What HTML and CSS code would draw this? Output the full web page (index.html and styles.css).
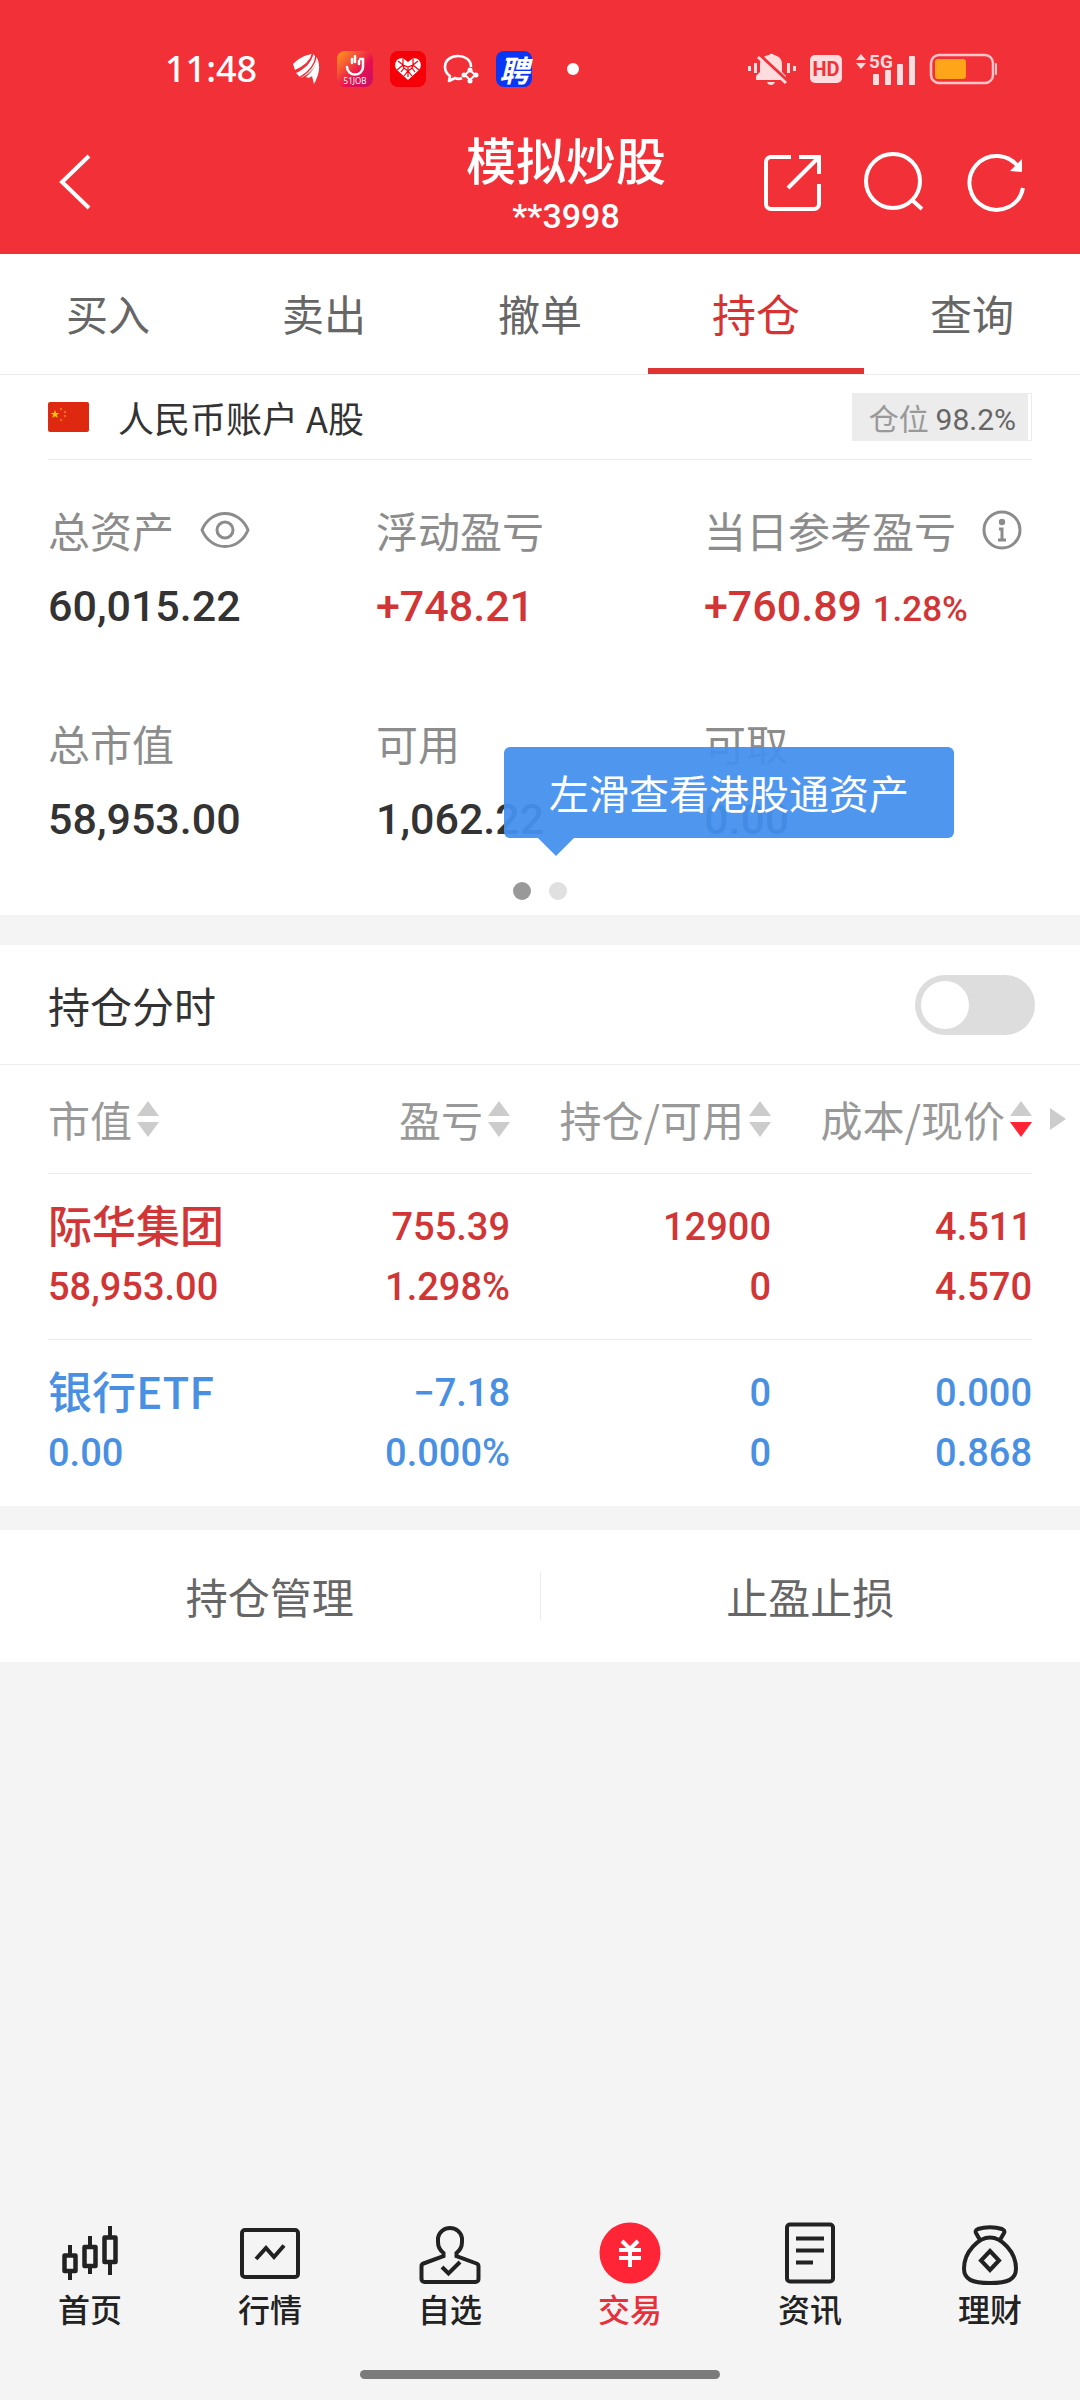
FILE: index.html
```html
<!DOCTYPE html>
<html lang="zh-CN">
<head>
  <meta charset="UTF-8">
  <meta name="viewport" content="width=device-width, initial-scale=1">
  <title>模拟炒股</title>
  <link rel="stylesheet" href="styles.css">
</head>
<body>

<div class="app">
  <header class="header">
    <!-- Status bar -->
    <div class="status">
      <div class="status-left">
        <span class="time">11:48</span>
        <svg width="28" height="32" viewBox="0 0 28 32" fill="#fff"><path d="M1 11C7 5 13 2 20 1c-1 8-7 12-17 16z"/><path d="M4 20C13 16 19 10 21 1l4 4c0 8-6 15-16 20z"/><path d="M14 24c6-5 10-11 11-19 4 8 2 17-3 26l-2-8c-2 2-4 2-6 1z"/><path d="M2 18.500C12 14 19 9 20.500 1M8 24.500C17 19 23 13 24 3" fill="none" stroke="#f23038" stroke-width="1.500"/></svg>
        <svg width="36" height="36" viewBox="0 0 36 36">
          <defs><linearGradient id="job" x1="0" y1="0" x2="1" y2="1"><stop offset="0" stop-color="#ff9d1c"/><stop offset=".6" stop-color="#e9104e"/><stop offset="1" stop-color="#c4106b"/></linearGradient></defs>
          <rect width="36" height="36" rx="8" fill="url(#job)"/>
          <path d="M10 16a8 7.500 0 0 0 16 0V8h-3M15 12V8M18 11V5M22 13V10" fill="none" stroke="#fff" stroke-width="2.500" stroke-linecap="round"/>
          <text x="18" y="33" text-anchor="middle" class="job-text">51JOB</text>
        </svg>
        <svg width="36" height="36" viewBox="0 0 36 36">
          <rect width="36" height="36" rx="8" fill="#f50008"/>
          <path d="M18 29L7 19c-5-6 1-14 7-11l4 3 4-3c6-3 12 5 7 11z" fill="#fff"/>
          <path d="M8 10l5 4-6 5M13 8v6l5 2 5-2V8M28 10l-5 4 6 5M11 21l3-4 4 3 4-3 3 4M18 16v10M14 25l4-5 4 5M13 14l1 3M23 14l-1 3" fill="none" stroke="#f50008" stroke-width="1.200"/>
        </svg>
        <svg width="36" height="32" viewBox="0 0 36 32" fill="none" stroke="#fff" stroke-width="2.600" stroke-linejoin="round"><path d="M28 14C28 6 21 3 15 3 8 3 2 7 2 14c0 4 2 7 5 9l-1 5 6-3c2 1 5 1 7 0"/><path d="M27 17l5 5-5 5-5-5z" stroke-width="2"/><g fill="#fff" stroke="none"><circle cx="27" cy="17" r="2.500"/><circle cx="33" cy="22" r="2.500"/><circle cx="27" cy="28" r="2.500"/><circle cx="21" cy="22" r="2.500"/></g></svg>
        <span class="zp-icon">聘</span>
        <span class="status-dot"></span>
      </div>
      <div class="status-right">
        <svg width="50" height="34" viewBox="0 0 50 34" fill="#ffdcdd"><path d="M9 28v-4l4-4v-8c0-5 4-8 9-9a3 3 0 0 1 5 0c5 1 8 4 8 9v8l4 4v4z"/><path d="M20 30h8c-1 4-7 4-8 0zM1 14h3v5H1zM7 11h3v10H7zM40 11h3v10h-3zM46 14h3v5h-3z"/><path d="M13 4l26 24" stroke="#f23038" stroke-width="4"/><path d="M11 5l28 26" stroke="#ffdcdd" stroke-width="3"/></svg>
        <span class="hd">HD</span>
        <svg width="62" height="34" viewBox="0 0 62 34" fill="#ffdcdd"><path d="M1 8l5-6 5 6zM1 11l5 6 5-6z"/><text x="14" y="16" class="net-text">5G</text><rect x="18" y="22" width="6" height="11" rx="1"/><rect x="30" y="18" width="6" height="15" rx="1"/><rect x="42" y="12" width="6" height="21" rx="1"/><rect x="54" y="4" width="6" height="29" rx="1"/></svg>
        <svg width="68" height="32" viewBox="0 0 68 32"><rect x="1" y="2" width="62" height="28" rx="8" fill="none" stroke="#ffc4c6" stroke-width="2.500"/><rect x="5" y="6" width="31" height="20" rx="3" fill="#ffa51a"/><rect x="65" y="10" width="2" height="12" rx="1" fill="#ffc4c6"/></svg>
      </div>
    </div>

    <!-- Title bar -->
    <div class="titlebar">
      <button class="icon-btn back" aria-label="返回">
        <svg width="60" height="60" viewBox="0 0 60 60"><path d="M41 1L14 27l27 26"/></svg>
      </button>
      <div class="title">
        <h1>模拟炒股</h1>
        <p>**3998</p>
      </div>
      <div class="title-actions">
        <button class="icon-btn" aria-label="分享">
          <svg width="60" height="60" viewBox="0 0 60 60"><path d="M29 2H9a5 5 0 0 0-5 5v42a5 5 0 0 0 5 5h43a5 5 0 0 0 5-5V29M37 2h20v17M57 2L26 33"/></svg>
        </button>
        <button class="icon-btn" aria-label="搜索">
          <svg width="60" height="60" viewBox="0 0 60 60"><circle cx="29" cy="26" r="27"/><path d="M48 45l10 9"/></svg>
        </button>
        <button class="icon-btn" aria-label="刷新">
          <svg width="60" height="60" viewBox="0 0 60 60"><path d="M53 13A27 27 0 1 0 57 33"/><path d="M56 4v13l-12-1z" fill="#fff" stroke="none"/></svg>
        </button>
      </div>
    </div>
  </header>

  <!-- Trade tabs -->
  <nav class="tabs">
    <a href="#buy">买入</a>
    <a href="#sell">卖出</a>
    <a href="#cancel">撤单</a>
    <a href="#hold" class="active">持仓</a>
    <a href="#query">查询</a>
  </nav>

  <!-- Assets -->
  <section class="assets">
    <div class="account">
      <svg class="flag" width="41" height="30" viewBox="0 0 41 30"><rect width="41" height="30" rx="2" fill="#de2910"/><path d="M7 8l1.200 3h3l-2.400 2 1 3L7 14.200 4.200 16l1-3-2.400-2h3z" fill="#ffc400"/><g fill="#f26a1b"><circle cx="13" cy="7" r="1.200"/><circle cx="17" cy="10" r="1.200"/><circle cx="17" cy="14" r="1.200"/><circle cx="13" cy="18" r="1.200"/></g></svg>
      <span class="account-name">人民币账户 A股</span>
      <span class="ratio"><span class="ratio-text">仓位 <b>98.2%</b></span></span>
    </div>

    <div class="summary">
      <div class="item">
        <div class="label">总资产
          <button class="eye" aria-label="隐藏金额"><svg width="50" height="40" viewBox="0 0 50 40"><path d="M2 20C11-2 39-2 48 20 39 42 11 42 2 20z"/><circle cx="25" cy="20" r="8"/></svg></button>
        </div>
        <div class="value">60,015.22</div>
      </div>
      <div class="item">
        <div class="label">浮动盈亏</div>
        <div class="value red">+748.21</div>
      </div>
      <div class="item">
        <div class="label">当日参考盈亏
          <button class="info" aria-label="说明"><svg width="40" height="40" viewBox="0 0 40 40"><circle cx="20" cy="20" r="18"/><circle cx="20" cy="12" r="3.200" fill="#8c8c8c" stroke="none"/><path d="M17 19h3v11M16 30h8"/></svg></button>
        </div>
        <div class="value red">+760.89 <small>1.28%</small></div>
      </div>
      <div class="item">
        <div class="label">总市值</div>
        <div class="value">58,953.00</div>
      </div>
      <div class="item">
        <div class="label">可用</div>
        <div class="value">1,062.22</div>
      </div>
      <div class="item">
        <div class="label">可取</div>
        <div class="value">0.00</div>
      </div>
    </div>

    <div class="dots">
      <span class="dot on"></span>
      <span class="dot"></span>
      <div class="tip">左滑查看港股通资产</div>
    </div>
  </section>

  <!-- Holdings -->
  <section class="holdings">
    <div class="switch-row">
      <label for="intraday">持仓分时</label>
      <input type="checkbox" id="intraday" class="switch">
    </div>
    <div class="table-wrap">
      <table>
        <thead>
          <tr>
            <th><button>市值<svg class="sort" width="22" height="36" viewBox="0 0 22 36"><path d="M0 15L11 0l11 15z"/><path d="M0 21l11 15 11-15z"/></svg></button></th>
            <th><button>盈亏<svg class="sort" width="22" height="36" viewBox="0 0 22 36"><path d="M0 15L11 0l11 15z"/><path d="M0 21l11 15 11-15z"/></svg></button></th>
            <th><button>持仓/可用<svg class="sort" width="22" height="36" viewBox="0 0 22 36"><path d="M0 15L11 0l11 15z"/><path d="M0 21l11 15 11-15z"/></svg></button></th>
            <th><button>成本/现价<svg class="sort" width="22" height="36" viewBox="0 0 22 36"><path d="M0 15L11 0l11 15z"/><path class="desc" d="M0 21l11 15 11-15z"/></svg></button></th>
          </tr>
        </thead>
        <tbody>
          <tr class="up">
            <td><span class="name">际华集团</span><span>58,953.00</span></td>
            <td><span>755.39</span><span>1.298%</span></td>
            <td><span>12900</span><span>0</span></td>
            <td><span>4.511</span><span>4.570</span></td>
          </tr>
          <tr class="down">
            <td><span class="name">银行ETF</span><span>0.00</span></td>
            <td><span>−7.18</span><span>0.000%</span></td>
            <td><span>0</span><span>0</span></td>
            <td><span>0.000</span><span>0.868</span></td>
          </tr>
        </tbody>
      </table>
      <div class="more"><svg width="16" height="22" viewBox="0 0 16 22"><path d="M0 0l16 11L0 22z" fill="#ccc"/></svg></div>
    </div>
  </section>

  <section class="actions">
    <button>持仓管理</button>
    <button>止盈止损</button>
  </section>

  <!-- Bottom nav -->
  <footer class="bottom">
    <nav class="bottom-nav">
      <a href="#home">
        <svg width="64" height="64" viewBox="0 0 64 64"><path d="M12 23v9M12 50v8M32 14v9M32 46v6M52 4v10M52 42v11"/><path d="M6.500 33.500h11v15.500h-11zM26.500 25h11v19h-11zM46.500 15.500h11v24.500h-11z" stroke-width="4.500" stroke-linejoin="round"/></svg>
        首页
      </a>
      <a href="#market">
        <svg width="64" height="64" viewBox="0 0 64 64"><rect x="4" y="8" width="56" height="47" rx="3"/><path d="M18 37l10-11 8 9 10-11.500"/></svg>
        行情
      </a>
      <a href="#watch">
        <svg width="64" height="64" viewBox="0 0 64 64"><path d="M25.500 34v-3c-4-3-5.500-6-5.500-11v-4a12.200 12.200 0 0 1 24 0v4c0 5-1.500 8-5.500 11v3l20 7.500a3 3 0 0 1 2 3V57a3 3 0 0 1-3 3h-51a3 3 0 0 1-3-3V44.500a3 3 0 0 1 2-3z"/><path d="M24 45l6.500 6.500L42 40"/></svg>
        自选
      </a>
      <a href="#trade" class="active">
        <svg width="64" height="64" viewBox="0 0 64 64"><circle cx="32" cy="31" r="30.500" fill="#ff2436" stroke="none"/><path d="M24 19l8 8 8-8M21 28h22M21 36h22M32 27v18" stroke="#fff"/></svg>
        交易
      </a>
      <a href="#news">
        <svg width="64" height="64" viewBox="0 0 64 64"><rect x="9" y="2.500" width="46" height="57" rx="3"/><path d="M18 16.500h28M18 28.500h28M18 40.500h17"/></svg>
        资讯
      </a>
      <a href="#wealth">
        <svg width="64" height="64" viewBox="0 0 64 64"><path d="M22 18l-4-7c-1-2 0-3 2-4 7-2.500 17-2.500 24 0 2 1 3 2 2 4l-4 7"/><path d="M32 15.500c11 0 26 14 26 31 0 11-8 14.500-26 14.500S6 57.500 6 46.500c0-17 15-31 26-31z"/><path d="M32 29l9 9.500-9 9.500-9-9.500z"/></svg>
        理财
      </a>
    </nav>
    <div class="home-bar"></div>
  </footer>
</div>

</body>
</html>
```
FILE: styles.css
```css
* {
  box-sizing: border-box;
}

body {
  margin: 0;
  font-family: "Noto Sans CJK SC", sans-serif;
  color: #333;
  background-color: #f4f4f4;
}

h1, p {
  margin: 0;
}

button {
  padding: 0;
  border: none;
  background: none;
  font-family: inherit;
  color: inherit;
  cursor: pointer;
}

a {
  color: inherit;
  text-decoration: none;
}

svg {
  display: block;
  flex: none;
  overflow: visible;
}

.app {
  display: flex;
  flex-direction: column;
  min-height: 100vh;
}

/* Header */
.header {
  padding-top: 42px;
  background-color: #f23038;
  color: #fff;
}

.status {
  display: flex;
  justify-content: space-between;
  align-items: center;
  height: 54px;
  padding: 0 82px 0 165px;
}

.status-left, .status-right {
  display: flex;
  align-items: center;
}

.status-left {
  gap: 17px;
}

.status-right {
  gap: 13px;
}

.time {
  margin-right: 18px;
  font: 500 36px/54px "Noto Sans", sans-serif;
}

.job-text {
  font: 8px "Noto Sans", sans-serif;
  fill: #fff;
}

.zp-icon {
  width: 36px;
  border-radius: 8px;
  background-color: #0b35f5;
  font-size: 30px;
  font-weight: 700;
  font-style: italic;
  line-height: 36px;
  text-align: center;
}

.status-dot {
  width: 12px;
  height: 12px;
  margin-left: 18px;
  border-radius: 50%;
  background-color: #fff;
}

.hd {
  width: 32px;
  border-radius: 5px;
  background-color: #ffdcdd;
  color: #f23038;
  font: 700 20px/28px Roboto, sans-serif;
  text-align: center;
}

.net-text {
  font: 700 19px Roboto, sans-serif;
}

.titlebar {
  display: flex;
  align-items: center;
  padding: 34px 54px 14px 48px;
}

.title {
  text-align: center;
}

.title h1 {
  margin-bottom: 6px;
  font-size: 50px;
  font-weight: 500;
  line-height: 56px;
}

.title p {
  font: 500 34px/48px Roboto, sans-serif;
}

.title-actions {
  display: flex;
  gap: 42px;
  margin-left: 96px;
}

.icon-btn svg {
  fill: none;
  stroke: #fff;
  stroke-width: 4;
}

.back {
  margin-right: auto;
}

/* Tabs */
.tabs {
  display: flex;
  border-bottom: 1px solid #ececec;
  background-color: #fff;
}

.tabs a {
  flex: 1;
  padding-top: 4px;
  border-bottom: 6px solid transparent;
  font-size: 42px;
  line-height: 110px;
  text-align: center;
  color: #666;
}

.tabs .active {
  border-color: #e03333;
  font-size: 44px;
  color: #d83232;
}

/* Assets */
.assets {
  padding: 0 48px 15px;
  background-color: #fff;
}

.account {
  display: flex;
  align-items: center;
  height: 85px;
  border-bottom: 1px solid #ececec;
}

.account-name {
  margin-left: 29px;
  font-size: 36px;
}

.ratio {
  margin-left: auto;
  padding-right: 3px;
  border: 1px solid #ececec;
}

.ratio-text {
  display: block;
  padding: 0 12px 0 16px;
  background-color: #ececec;
  font-size: 30px;
  line-height: 46px;
  color: #999;
}

.ratio b {
  font-family: Roboto, sans-serif;
  font-weight: 400;
  line-height: 1;
  color: #666;
}

.summary {
  display: grid;
  grid-template-columns: repeat(3, 1fr);
  row-gap: 89px;
  padding-top: 46px;
}

.label {
  display: flex;
  align-items: center;
  margin-bottom: 28px;
  font-size: 42px;
  line-height: 48px;
  white-space: nowrap;
  color: #8c8c8c;
}

.label svg {
  fill: none;
  stroke: #8c8c8c;
  stroke-width: 3;
}

.eye, .info {
  margin-left: 26px;
}

.value {
  font-family: Roboto, sans-serif;
  font-size: 43px;
  font-weight: 500;
  line-height: 48px;
  white-space: nowrap;
}

.value small {
  font-size: 35px;
  line-height: 1;
}

.red {
  color: #d13535;
}

.dots {
  position: relative;
  display: flex;
  justify-content: center;
  gap: 18px;
  margin-top: 39px;
}

.dot {
  width: 18px;
  height: 18px;
  border-radius: 50%;
  background-color: #e0e0e0;
}

.dot.on {
  background-color: #999;
}

/* Tip bubble above the dots */
.tip {
  position: absolute;
  left: calc(50% - 36px);
  bottom: 62px;
  width: 450px;
  border-radius: 6px;
  background-color: rgba(70, 144, 238, 0.95);
  font-size: 40px;
  line-height: 91px;
  text-align: center;
  color: #fff;
}

.tip::after {
  content: "";
  position: absolute;
  top: 100%;
  left: 34px;
  border: 18px solid transparent;
  border-top-color: rgba(70, 144, 238, 0.95);
  border-bottom: none;
}

/* Holdings */
.holdings {
  margin-top: 30px;
  background-color: #fff;
}

.switch-row {
  display: flex;
  justify-content: space-between;
  align-items: center;
  height: 120px;
  padding: 0 45px 0 48px;
  border-bottom: 1px solid #ececec;
  font-size: 42px;
}

.switch {
  appearance: none;
  width: 120px;
  height: 60px;
  margin: 0;
  padding: 6px;
  border-radius: 30px;
  background-color: #ddd;
}

.switch::before {
  content: "";
  display: block;
  width: 48px;
  height: 48px;
  border-radius: 50%;
  background-color: #fff;
}

.switch:checked {
  background-color: #e03333;
}

.switch:checked::before {
  margin-left: auto;
}

.table-wrap {
  display: flex;
  padding-left: 48px;
}

table {
  flex: 1;
  border-collapse: separate;
  border-spacing: 0;
  table-layout: fixed;
}

th, td {
  width: 261px;
  padding: 0;
  border-bottom: 1px solid #ececec;
  text-align: right;
  white-space: nowrap;
}

th:first-child, td:first-child {
  width: 201px;
  text-align: left;
}

th {
  height: 109px;
}

th button {
  display: inline-flex;
  align-items: center;
  gap: 5px;
  font-size: 42px;
  line-height: 60px;
  vertical-align: middle;
  color: #999;
}

.sort {
  fill: #ccc;
}

.sort .desc {
  fill: #ff2436;
}

td {
  padding: 23px 0 22px;
  font-family: Roboto, sans-serif;
  font-size: 38px;
  font-weight: 500;
}

td span {
  display: block;
  line-height: 60px;
}

tr:last-child td {
  border-color: transparent;
}

td .name {
  margin-bottom: 6px;
  font-family: "Noto Sans CJK SC", sans-serif;
  font-size: 44px;
  line-height: 54px;
}

.up {
  color: #d13535;
}

.down {
  color: #4a90e2;
}

.more {
  width: 48px;
  padding: 43px 0 0 18px;
}

/* Actions */
.actions {
  display: flex;
  margin-top: 24px;
  padding: 42px 0;
  background-color: #fff;
}

.actions button {
  flex: 1;
  font-size: 42px;
  line-height: 48px;
  color: #666;
}

.actions button + button {
  border-left: 1px solid #ececec;
}

/* Bottom nav */
.bottom {
  margin-top: auto;
  padding-bottom: 21px;
}

.bottom-nav {
  display: flex;
}

.bottom-nav a {
  flex: 1;
  display: flex;
  flex-direction: column;
  align-items: center;
  gap: 2px;
  font-size: 32px;
  font-weight: 500;
  line-height: 40px;
  color: #222;
}

.bottom-nav .active {
  color: #e8303c;
}

.bottom-nav svg {
  fill: none;
  stroke: #222;
  stroke-width: 4;
}

.home-bar {
  width: 360px;
  height: 9px;
  margin: 42px auto 0;
  border-radius: 5px;
  background-color: #7b7b7b;
}
```
